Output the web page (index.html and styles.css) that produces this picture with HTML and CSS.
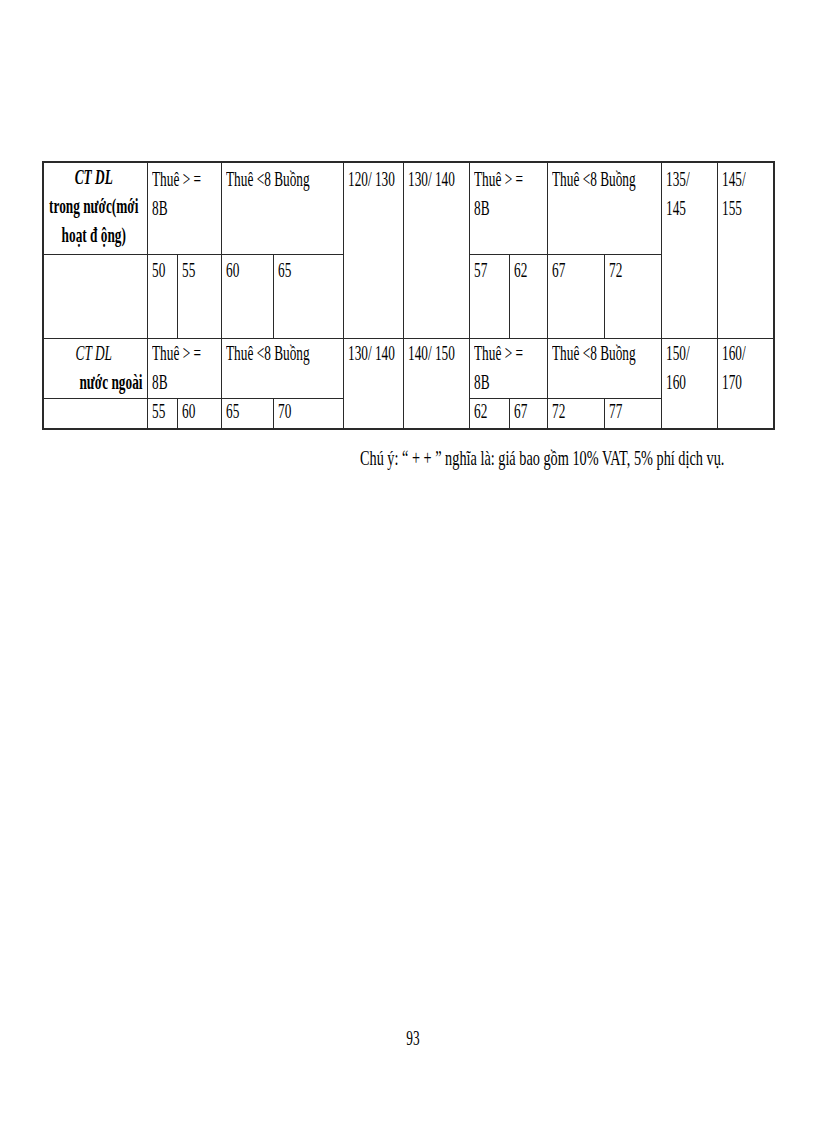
FILE: index.html
```html
<!DOCTYPE html>
<html lang="vi">
<head>
<meta charset="utf-8">
<title>93</title>
<link rel="stylesheet" href="styles.css">
</head>
<body>
<div class="page">
  <table class="rates">
    <colgroup>
      <col class="c104"><col class="c30"><col class="c44"><col class="c52"><col class="c70">
      <col class="c60"><col class="c66"><col class="c40"><col class="c38">
      <col class="c57"><col class="c57"><col class="c56"><col class="c57">
    </colgroup>
    <tr class="r1">
      <td class="lab"><div class="t center"><b><i>CT DL</i></b><br><b>trong nước(mới</b><br><b>hoạt đ ộng)</b></div></td>
      <td colspan="2"><div class="t">Thuê &gt; =<br>8B</div></td>
      <td colspan="2"><div class="t">Thuê &lt;8 Buồng</div></td>
      <td rowspan="2"><div class="t">120/ 130</div></td>
      <td rowspan="2"><div class="t">130/ 140</div></td>
      <td colspan="2"><div class="t">Thuê &gt; =<br>8B</div></td>
      <td colspan="2"><div class="t">Thuê &lt;8 Buồng</div></td>
      <td rowspan="2"><div class="t">135/<br>145</div></td>
      <td rowspan="2"><div class="t">145/<br>155</div></td>
    </tr>
    <tr class="r2">
      <td></td>
      <td><div class="t">50</div></td>
      <td><div class="t">55</div></td>
      <td><div class="t">60</div></td>
      <td><div class="t">65</div></td>
      <td><div class="t">57</div></td>
      <td><div class="t">62</div></td>
      <td><div class="t">67</div></td>
      <td><div class="t">72</div></td>
    </tr>
    <tr class="r3">
      <td class="lab"><div class="t"><div class="center"><i>CT DL</i></div><div class="right"><b>nước ngoài</b></div></div></td>
      <td colspan="2"><div class="t">Thuê &gt; =<br>8B</div></td>
      <td colspan="2"><div class="t">Thuê &lt;8 Buồng</div></td>
      <td rowspan="2"><div class="t">130/ 140</div></td>
      <td rowspan="2"><div class="t">140/ 150</div></td>
      <td colspan="2"><div class="t">Thuê &gt; =<br>8B</div></td>
      <td colspan="2"><div class="t">Thuê &lt;8 Buồng</div></td>
      <td rowspan="2"><div class="t">150/<br>160</div></td>
      <td rowspan="2"><div class="t">160/<br>170</div></td>
    </tr>
    <tr class="r4">
      <td></td>
      <td><div class="t">55</div></td>
      <td><div class="t">60</div></td>
      <td><div class="t">65</div></td>
      <td><div class="t">70</div></td>
      <td><div class="t">62</div></td>
      <td><div class="t">67</div></td>
      <td><div class="t">72</div></td>
      <td><div class="t">77</div></td>
    </tr>
  </table>
  <div class="note"><div class="t">Chú ý: “ + + ” nghĩa là: giá bao gồm 10% VAT, 5% phí dịch vụ.</div></div>
  <div class="pageno"><div class="t center">93</div></div>
</div>
</body>
</html>
```

FILE: styles.css
```css
html, body {
  margin: 0;
  padding: 0;
  background: #fff;
}

.page {
  width: 816px;
  height: 1123px;
  padding: 161px 0 0 42px;
  box-sizing: border-box;
  font-family: "Liberation Serif", "Times New Roman", serif;
  font-size: 20px;
  line-height: 29px;
  color: #000;
  overflow: hidden;
}

.t {
  width: calc(100% / 0.665);
  transform: scaleX(0.665);
  transform-origin: 0 0;
  white-space: nowrap;
}

.center { text-align: center; }
.right { text-align: right; }

.rates {
  border-collapse: collapse;
  table-layout: fixed;
  width: 732px;
  border: 2px solid #2a2a2a;
}

.rates td {
  border: 1px solid #2a2a2a;
  vertical-align: top;
  padding: 0 4px;
  overflow: visible;
}

.rates td.lab { padding: 0 4px 0 1px; }

.c104 { width: 104px; }
.c30 { width: 30px; }
.c44 { width: 44px; }
.c52 { width: 52px; }
.c70 { width: 70px; }
.c60 { width: 60px; }
.c66 { width: 66px; }
.c40 { width: 40px; }
.c38 { width: 38px; }
.c57 { width: 57px; }
.c56 { width: 56px; }

.r1 { height: 92px; }
.r1 td { padding-top: 2px; }

.r2 { height: 84px; }
.r2 td { padding-top: 1px; }

.r3 { height: 60px; }
.r3 td { padding-top: 0; }

.r4 { height: 31px; }
.r4 td { padding-top: 0; line-height: 24px; }

.note {
  margin-top: 14px;
  padding-left: 318px;
  font-size: 21px;
}

.note .t {
  width: calc(100% / 0.68);
  transform: scaleX(0.68);
}

.pageno {
  margin-top: 551px;
  width: 732px;
  padding-left: 5px;
}
```
